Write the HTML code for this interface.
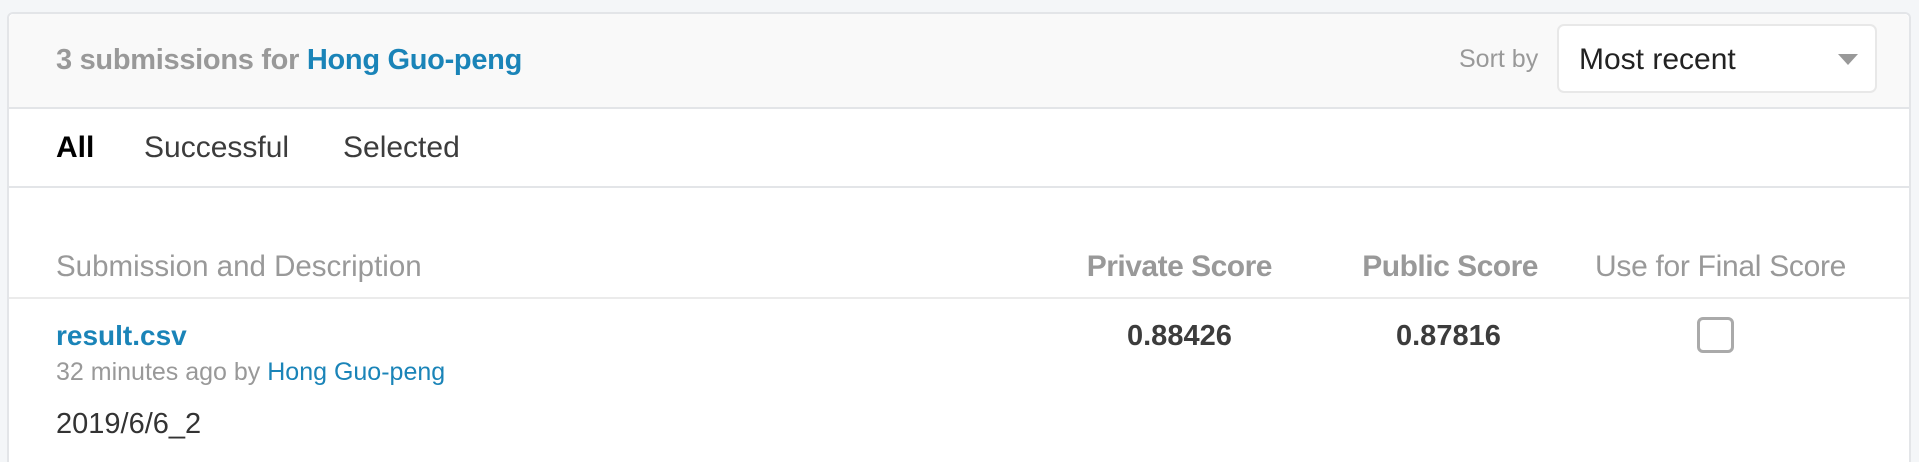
<!DOCTYPE html>
<html style="height:462px;overflow:hidden"><head><style>
body{margin:0;width:1919px;height:462px;background:#f4f6f8;font-family:"Liberation Sans",sans-serif;position:relative;overflow:hidden}
.card{position:absolute;left:7px;top:12px;width:1904px;height:450px;background:#fff;border:2px solid #e3e5e8;border-bottom:none;border-radius:6px 6px 0 0;box-sizing:border-box}
.hdr{position:absolute;left:0;top:0;right:0;height:93px;background:#f9f9f9;border-bottom:2px solid #e3e5e8;border-radius:6px 6px 0 0}
.t{position:absolute;white-space:nowrap;line-height:1}
.blue{color:#1a84b8}
.grey{color:#999}
</style></head><body>
<div class="card">
 <div class="hdr"></div>
 <div style="position:absolute;left:0;right:0;top:172px;border-top:2px solid #e3e5e8"></div>
 <div style="position:absolute;left:0;right:0;top:283px;border-top:2px solid #ebebeb"></div>
</div>
<div class="t grey" style="left:56px;top:46px;font-size:29px;font-weight:bold;letter-spacing:-0.3px">3 submissions for <span class="blue">Hong Guo-peng</span></div>
<div class="t grey" style="left:1459px;top:47px;font-size:25px">Sort by</div>
<div style="position:absolute;left:1557px;top:24px;width:320px;height:69px;background:#fff;border:2px solid #e8e8e8;border-radius:7px;box-sizing:border-box"></div>
<div class="t" style="left:1579px;top:45px;font-size:30px;color:#222">Most recent</div>
<div style="position:absolute;left:1838px;top:54px;width:0;height:0;border-left:10px solid transparent;border-right:10px solid transparent;border-top:11px solid #999"></div>
<div class="t" style="left:56px;top:133px;font-size:30px;font-weight:bold;color:#000">All</div>
<div class="t" style="left:144px;top:133px;font-size:30px;color:#3c3c3c">Successful</div>
<div class="t" style="left:343px;top:133px;font-size:30px;color:#3c3c3c">Selected</div>
<div class="t grey" style="left:56px;top:252px;font-size:29.5px">Submission and Description</div>
<div class="t grey" style="left:1072px;top:252px;font-size:30px;font-weight:bold;width:200px;text-align:right;letter-spacing:-0.5px">Private Score</div>
<div class="t grey" style="left:1338px;top:252px;font-size:30px;font-weight:bold;width:200px;text-align:right;letter-spacing:-0.5px">Public Score</div>
<div class="t grey" style="left:1595px;top:252px;font-size:30px;letter-spacing:-0.3px">Use for Final Score</div>
<div class="t blue" style="left:56px;top:322px;font-size:28px;font-weight:bold">result.csv</div>
<div class="t grey" style="left:56px;top:360px;font-size:25px">32 minutes ago by <span class="blue">Hong Guo-peng</span></div>
<div class="t" style="left:56px;top:410px;font-size:29px;color:#333">2019/6/6_2</div>
<div class="t" style="left:1127px;top:322px;font-size:29px;font-weight:bold;color:#3c3c3c">0.88426</div>
<div class="t" style="left:1396px;top:322px;font-size:29px;font-weight:bold;color:#3c3c3c">0.87816</div>
<div style="position:absolute;left:1697px;top:317px;width:37px;height:36px;border:3px solid #aaa;border-radius:6px;box-sizing:border-box"></div>
</body></html>
